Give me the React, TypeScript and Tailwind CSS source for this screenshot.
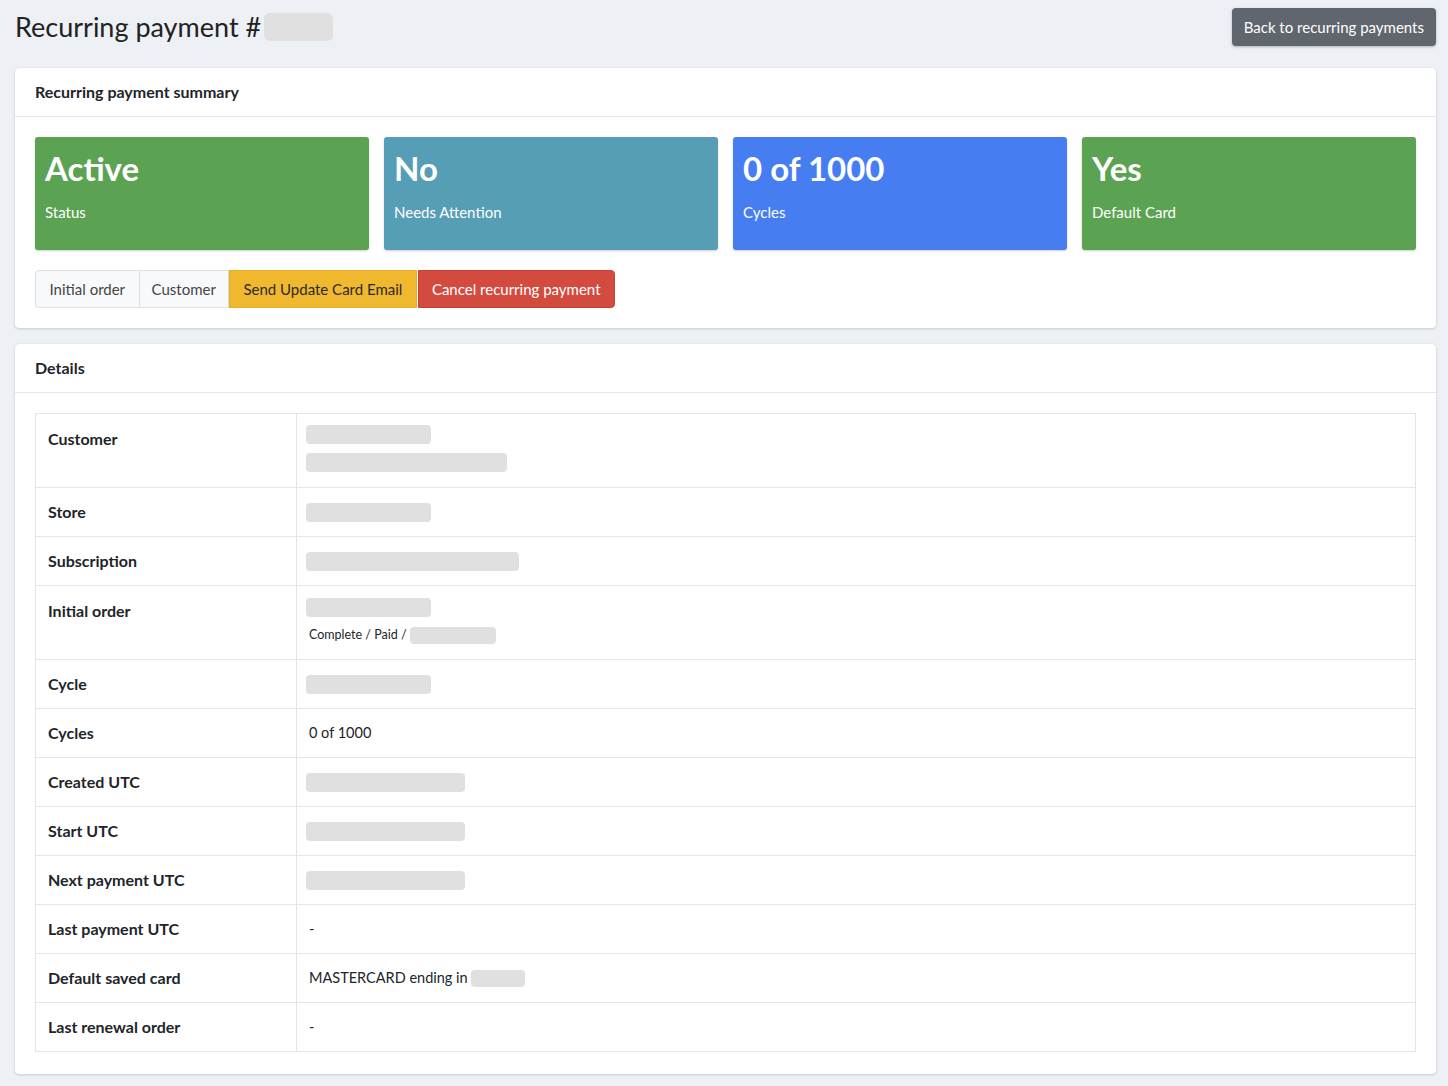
import React from "react";

const Bar = ({ w, h = 19, className = "" }: { w: number; h?: number; className?: string }) => (
  <span
    className={"inline-block rounded-[4px] bg-[#e0e0e0] align-middle " + className}
    style={{ width: w, height: h }}
  />
);

type Row = { label: string; value: React.ReactNode; pb?: string };

export default function App() {
  const tiles = [
    { big: "Active", small: "Status", bg: "bg-[#5ba352]" },
    { big: "No", small: "Needs Attention", bg: "bg-[#559eb6]" },
    { big: "0 of 1000", small: "Cycles", bg: "bg-[#467ef2]" },
    { big: "Yes", small: "Default Card", bg: "bg-[#5ba352]" },
  ];

  const rows: Row[] = [
    {
      label: "Customer",
      pb: "pb-[15px]",
      value: (
        <div className="flex flex-col">
          <Bar w={125} className="-ml-[3px] mt-[-1px]" />
          <Bar w={201} className="-ml-[3px] mt-[9px]" />
        </div>
      ),
    },
    { label: "Store", value: <Bar w={125} className="-ml-[3px]" /> },
    { label: "Subscription", value: <Bar w={213} className="-ml-[3px]" /> },
    {
      label: "Initial order",
      pb: "pb-[15px]",
      value: (
        <div className="flex flex-col">
          <Bar w={125} className="-ml-[3px]" />
          <div className="mt-[9px] flex items-center text-[12.5px] leading-[18px]">
            <span>Complete / Paid /&nbsp;</span>
            <Bar w={86} h={17} />
          </div>
        </div>
      ),
    },
    { label: "Cycle", value: <Bar w={125} className="-ml-[3px]" /> },
    { label: "Cycles", value: <span>0 of 1000</span> },
    { label: "Created UTC", value: <Bar w={159} className="-ml-[3px]" /> },
    { label: "Start UTC", value: <Bar w={159} className="-ml-[3px]" /> },
    { label: "Next payment UTC", value: <Bar w={159} className="-ml-[3px]" /> },
    { label: "Last payment UTC", value: <span>-</span> },
    {
      label: "Default saved card",
      value: (
        <span className="flex items-center">
          MASTERCARD ending in&nbsp;
          <Bar w={54} h={17} />
        </span>
      ),
    },
    { label: "Last renewal order", value: <span>-</span> },
  ];

  return (
    <div
      className="min-h-[1086px] bg-[#edf0f4] text-[#212529]"
      style={{ fontFamily: "Lato, 'Noto Sans', sans-serif" }}
    >
      <div className="flex items-center justify-between pl-[12px] pr-[12px] pt-[8px]">
        <h1 className="flex items-center pl-[3px] text-[27px] font-normal leading-[38px] text-[#222]">
          Recurring payment #
          <span className="ml-[3px] inline-block h-[28px] w-[69px] rounded-[6px] bg-[#e0e0e0]" />
        </h1>
        <button className="h-[38px] rounded-[4px] bg-[#5f666d] px-[12px] text-[15px] text-white shadow-[0_1px_3px_rgba(0,0,0,0.25)]">
          Back to recurring payments
        </button>
      </div>

      <div className="ml-[15px] mr-[12px] mt-[22px] rounded-[4px] bg-white shadow-[0_0_1px_rgba(0,0,0,0.13),0_1px_3px_rgba(0,0,0,0.15)]">
        <div className="border-b border-[#e5e7ea] px-[20px] py-[12px] text-[16px] font-bold leading-[24px]">
          Recurring payment summary
        </div>
        <div className="px-[20px] py-[20px]">
          <div className="grid grid-cols-4 gap-[15px]">
            {tiles.map((t) => (
              <div
                key={t.big}
                className={t.bg + " h-[113px] rounded-[3px] px-[10px] pt-[10px] text-white shadow-[0_1px_2px_rgba(0,0,0,0.2)]"}
              >
                <div className="text-[33px] font-bold leading-[42px]">{t.big}</div>
                <div className="mt-[12px] text-[15px] leading-[22px]">{t.small}</div>
              </div>
            ))}
          </div>
          <div className="mt-[20px] flex text-[15px] leading-[22px]">
            <button className="h-[38px] rounded-l-[4px] border border-[#dcdfe3] bg-[#f8f9fa] px-[13.5px] text-[#444]">
              Initial order
            </button>
            <button className="h-[38px] border border-l-0 border-[#dcdfe3] bg-[#f8f9fa] px-[12px] text-[#444]">
              Customer
            </button>
            <button className="h-[38px] border border-[#e9ad22] bg-[#f0b82f] px-[13.5px] text-[#2b2b2b]">
              Send Update Card Email
            </button>
            <button className="ml-px h-[38px] rounded-r-[4px] border border-[#c44235] bg-[#d24b3e] px-[13px] text-white">
              Cancel recurring payment
            </button>
          </div>
        </div>
      </div>

      <div className="ml-[15px] mr-[12px] mt-[16px] rounded-[4px] bg-white shadow-[0_0_1px_rgba(0,0,0,0.13),0_1px_3px_rgba(0,0,0,0.15)]">
        <div className="border-b border-[#e5e7ea] px-[20px] py-[12px] text-[16px] font-bold leading-[24px]">
          Details
        </div>
        <div className="px-[20px] pb-[22px] pt-[20px]">
          <table className="w-full border-collapse border border-[#e3e5e8] leading-[24px]">
            <tbody>
              {rows.map((r) => (
                <tr key={r.label} className="border-b border-[#e3e5e8]">
                  <td
                    className={
                      "w-[261px] border-r border-[#e3e5e8] px-[12px] align-top text-[16px] font-bold " +
                      (r.pb ? "pb-[12px] pt-[13px]" : "py-[12px]")
                    }
                  >
                    {r.label}
                  </td>
                  <td className={"px-[12px] align-top text-[14.5px] " + (r.pb ? r.pb + " pt-[12px]" : "py-[12px]")}>
                    <div className={r.pb ? "" : "flex h-[24px] items-center"}>{r.value}</div>
                  </td>
                </tr>
              ))}
            </tbody>
          </table>
        </div>
      </div>
    </div>
  );
}
